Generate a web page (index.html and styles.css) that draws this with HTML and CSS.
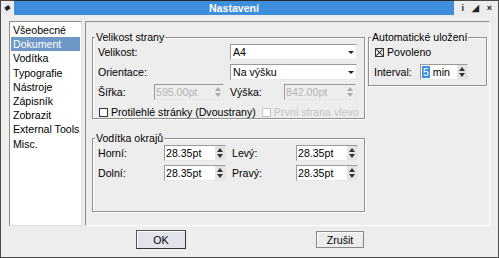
FILE: index.html
```html
<!DOCTYPE html>
<html lang="cs">
<head>
	<meta charset="UTF-8">
	<title>Nastavení</title>
	<link rel="stylesheet" href="styles.css">
</head>
<body>
	<div class="window">
		<div class="titlebar">
			<div class="tb-left"><span class="pin"></span></div>
			<div class="tb-title">Nastavení</div>
			<div class="tb-right">
				<span class="tb-btn">i</span>
				<span class="tb-btn">&#9698;</span>
				<span class="tb-btn">&times;</span>
			</div>
		</div>

		<div class="content">
			<ul class="list">
				<li>Všeobecné</li>
				<li class="sel">Dokument</li>
				<li>Vodítka</li>
				<li>Typografie</li>
				<li>Nástroje</li>
				<li>Zápisník</li>
				<li>Zobrazit</li>
				<li>External Tools</li>
				<li>Misc.</li>
			</ul>

			<div class="panel">
				<div class="col-left">
					<fieldset class="group g-size">
						<legend>Velikost strany</legend>
						<div class="row">
							<span class="lbl">Velikost:</span>
							<div class="combo"><span>A4</span><i class="drop"></i></div>
						</div>
						<div class="row">
							<span class="lbl">Orientace:</span>
							<div class="combo"><span>Na výšku</span><i class="drop"></i></div>
						</div>
						<div class="row">
							<span class="lbl lbl-w">Šířka:</span>
							<div class="spin dis w70"><span>595.00pt</span><i class="arr"></i></div>
							<span class="lbl lbl-h">Výška:</span>
							<div class="spin dis w72"><span>842.00pt</span><i class="arr"></i></div>
						</div>
						<div class="row row-check">
							<span class="check"><i class="box"></i>Protilehlé stránky (Dvoustrany)</span>
							<span class="check dis"><i class="box"></i>První strana vlevo</span>
						</div>
					</fieldset>

					<fieldset class="group g-margin">
						<legend>Vodítka okrajů</legend>
						<div class="row">
							<span class="lbl lbl-m">Horní:</span>
							<div class="spin w62"><span>28.35pt</span><i class="arr"></i></div>
							<span class="lbl lbl-m2">Levý:</span>
							<div class="spin w62"><span>28.35pt</span><i class="arr"></i></div>
						</div>
						<div class="row">
							<span class="lbl lbl-m">Dolní:</span>
							<div class="spin w62"><span>28.35pt</span><i class="arr"></i></div>
							<span class="lbl lbl-m2">Pravý:</span>
							<div class="spin w62"><span>28.35pt</span><i class="arr"></i></div>
						</div>
					</fieldset>
				</div>

				<div class="col-right">
					<fieldset class="group g-save">
						<legend>Automatické uložení</legend>
						<div class="row">
							<span class="check"><i class="box on"></i>Povoleno</span>
						</div>
						<div class="row">
							<span class="lbl lbl-i">Interval:</span>
							<div class="spin w48"><span><b class="cur">5</b> min</span><i class="arr"></i></div>
						</div>
					</fieldset>
				</div>
			</div>
		</div>

		<div class="buttons">
			<button class="btn btn-ok">OK</button>
			<button class="btn btn-cancel">Zrušit</button>
		</div>
	</div>
</body>
</html>
```

FILE: styles.css
```css
body{ margin:0; padding:0; font-family:"Liberation Sans", Arial, sans-serif; font-size:10.6px; color:#000; background:#fff;}
ul,li{ margin:0; padding:0; list-style:none;}

.window{ width:499px; height:258px; box-sizing:border-box; border:1px solid #4b4b4b; border-top:0; background:#ededed; display:flex; flex-direction:column;}

/* titulek */
.titlebar{ height:15px; display:flex; flex-shrink:0;}
.tb-left{ width:13px; background:#ececec; border-top:1px solid #4b4b4b; position:relative;}
.pin{ position:absolute; left:4px; top:5px; width:5px; height:4px; background:#222; transform:rotate(-35deg);}
.tb-title{ flex:1; background:#3e8ede; border-top:1px solid #2b2b2b; color:#fff; font-weight:bold; line-height:14px; text-align:center;}
.tb-right{ width:44px; background:#ececec; border-top:1px solid #4b4b4b; display:flex; justify-content:space-around; align-items:center; font-size:9px; font-weight:bold; color:#222; padding:0 2px; box-sizing:border-box;}
.tb-btn{ width:10px; text-align:center; line-height:10px;}

.content{ display:flex; gap:3px; padding:6px 8px 0 8px; height:205px;}

/* seznam vlevo */
.list{ width:73px; height:205px; box-sizing:border-box; background:#fff; border:1px solid #8d8d8d; border-right-color:#e0e0e0; border-bottom-color:#e0e0e0; padding:1px 1px 0 1px;}
.list li{ height:14.2px; line-height:14px; padding-left:2px; white-space:nowrap;}
.list li.sel{ background:#6d98c5; color:#fff;}

/* hlavni panel */
.panel{ flex:1; height:205px; box-sizing:border-box; border:1px solid #8d8d8d; border-right-color:#fff; border-bottom-color:#fff; display:flex; gap:3px; padding:9px 0 0 6px;}
.col-left{ width:273px; display:flex; flex-direction:column; gap:13px;}
.col-right{ width:119px;}

.group{ margin:0; padding:0 6px 0 5px; border:1px solid #8f8f8f; box-shadow:1px 1px 0 #fff, inset 1px 1px 0 #fff; min-width:0;}
.group legend{ padding:0 1px; margin-left:-3px; line-height:13px; white-space:nowrap;}
.group .row:first-of-type{ margin-top:-2px;}
.g-size{ height:86px;}
.g-margin{ height:78px;}
.g-save{ height:53px;}

.row{ display:flex; align-items:center; height:20px;}
.lbl{ width:132px;}
.lbl-w{ width:56px;}
.lbl-h{ width:54px; padding-left:6px;}
.lbl-m{ width:66px;}
.lbl-m2{ width:64px; padding-left:6px;}
.lbl-i{ width:46px;}

.combo{ width:127px; height:16px; box-sizing:border-box; background:#fff; border:1px solid #9a9a9a; border-right-color:#e8e8e8; border-bottom-color:#e8e8e8; display:flex; align-items:center; padding-left:2px;}
.combo span{ flex:1;}
.drop{ width:11px; height:14px; position:relative;}
.drop::after{ content:""; position:absolute; left:3px; top:6px; border-left:3px solid transparent; border-right:3px solid transparent; border-top:3px solid #222;}

.spin{ height:16px; box-sizing:border-box; background:#fff; border:1px solid #9a9a9a; border-right-color:#e8e8e8; border-bottom-color:#e8e8e8; display:flex; align-items:center; padding-left:1px;}
.spin span{ flex:1; white-space:nowrap; overflow:hidden;}
.spin.dis{ background:#ededed; color:#b4b4b4;}
.w70{ width:70px;}
.w72{ width:72px;}
.w62{ width:62px;}
.w48{ width:48px;}
.arr{ width:10px; height:14px; background:#e4e4e4; position:relative;}
.arr::before{ content:""; position:absolute; left:2px; top:2px; border-left:3px solid transparent; border-right:3px solid transparent; border-bottom:4px solid #333;}
.arr::after{ content:""; position:absolute; left:2px; top:8px; border-left:3px solid transparent; border-right:3px solid transparent; border-top:4px solid #333;}
.spin.dis .arr{ background:#ededed;}
.spin.dis .arr::before{ border-bottom-color:#aaa;}
.spin.dis .arr::after{ border-top-color:#aaa;}
.cur{ font-weight:normal; background:#3e8ede; color:#fff; padding:0 1px;}

.row-check{ gap:5px;}
.check{ display:flex; align-items:center; white-space:nowrap;}
.check .box{ width:7px; height:7px; border:1px solid #333; background:#fff; margin:0 3px 0 1px; position:relative;}
.check.dis{ color:#c4c4c4;}
.check.dis .box{ border-color:#c4c4c4;}
.box.on::before, .box.on::after{ content:""; position:absolute; left:3px; top:-1px; width:1px; height:9px; background:#222; transform:rotate(45deg);}
.box.on::after{ transform:rotate(-45deg);}

.buttons{ display:flex; padding:4px 0 0 0; height:20px;}
.btn{ font-family:"Liberation Sans", Arial, sans-serif; font-size:10.6px; color:#000; background:#e2e2ea; height:19px; padding:0; border:1px solid #555; border-right-color:#333; border-bottom-color:#333; box-shadow:inset 1px 1px 0 #fff;}
.btn-ok{ width:50px; margin-left:135px;}
.btn-cancel{ width:48px; margin-left:130px; height:17px; margin-top:1px; border-color:#888; background:#ececec;}
```
